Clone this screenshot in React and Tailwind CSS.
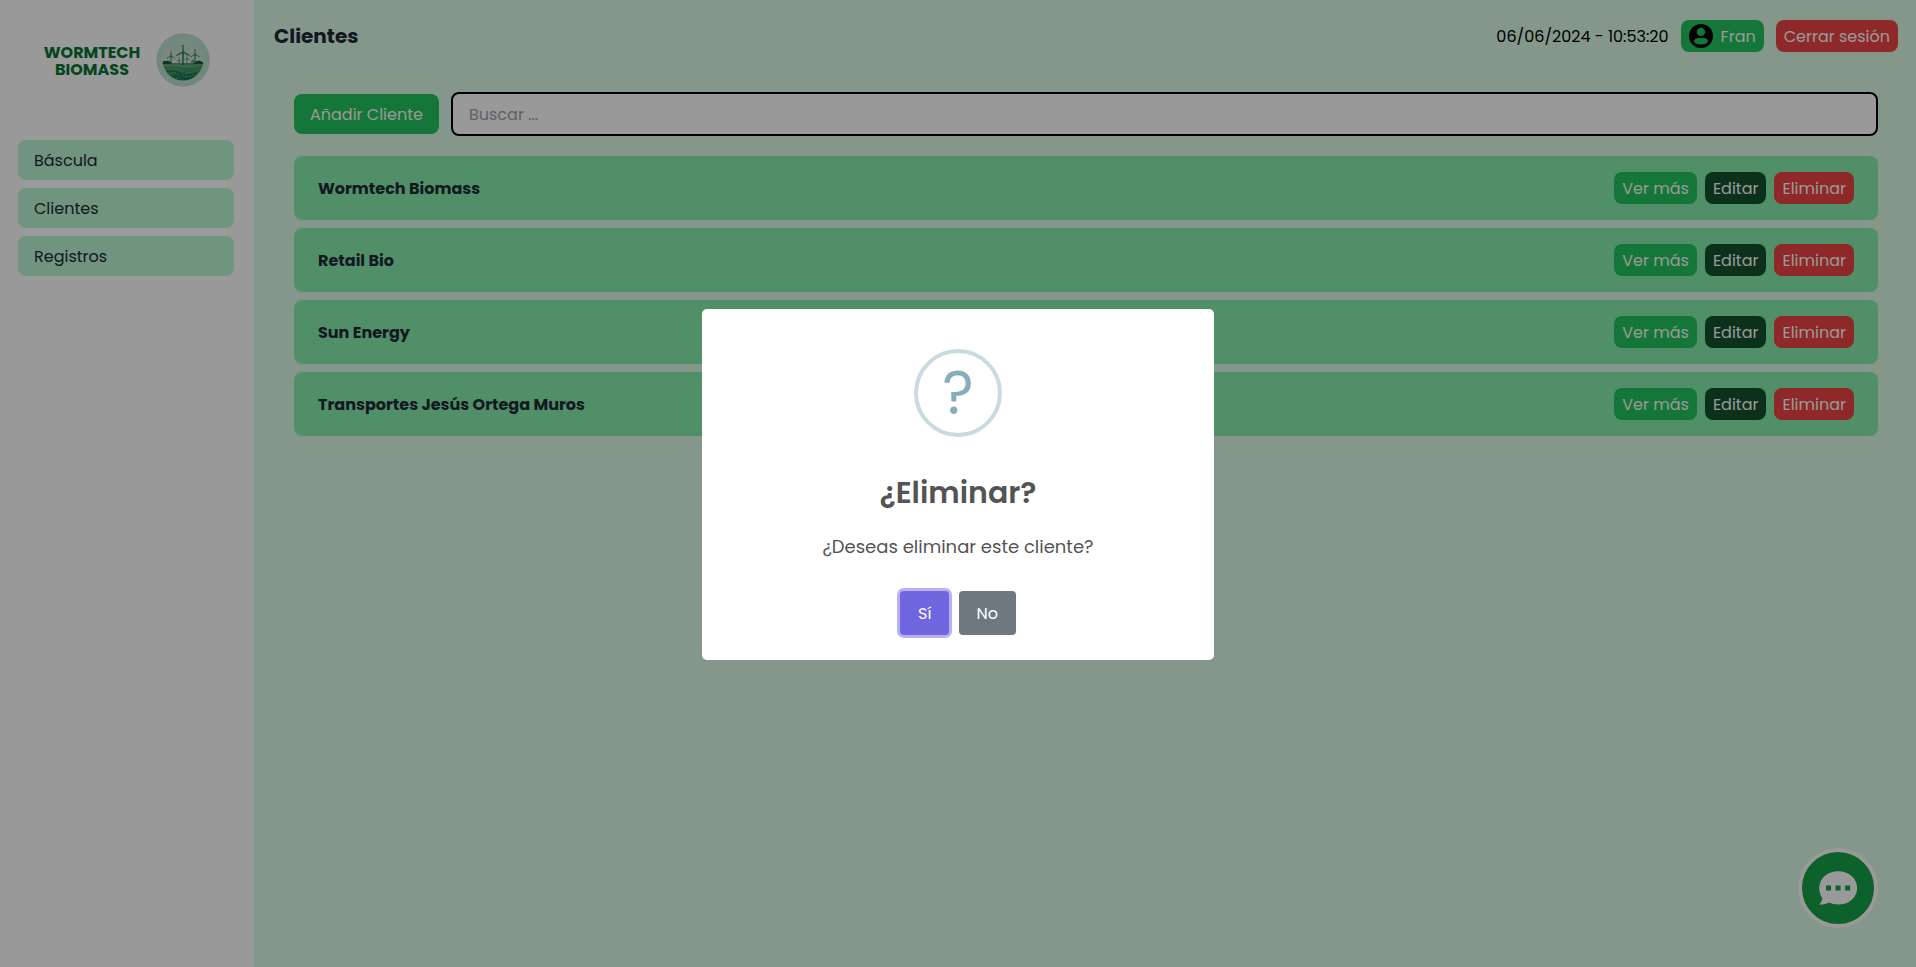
const clients = [
  "Wormtech Biomass",
  "Retail Bio",
  "Sun Energy",
  "Transportes Jesús Ortega Muros",
];

const sections = ["Báscula", "Clientes", "Registros"];

function Turbine({ x, y, h, r }) {
  return (
    <g transform={`translate(${x} ${y})`} stroke="#1d6b62" strokeLinecap="round" fill="none">
      <path d={`M0 0V${h}`} strokeWidth={r * 0.2} />
      <path d={`M0 0V${-r}M0 0L${r * 0.87} ${r * 0.45}M0 0L${-r * 0.87} ${r * 0.45}`} strokeWidth={r * 0.16} />
    </g>
  );
}

function LogoBadge() {
  return (
    <svg className="size-[54px]" viewBox="0 0 54 54">
      <defs>
        <clipPath id="scene">
          <circle cx="27" cy="27" r="20.5" />
        </clipPath>
        <linearGradient id="sky" x1="0" y1="0" x2="0" y2="1">
          <stop offset="0" stopColor="#bfe3d3" />
          <stop offset="0.4" stopColor="#c8e2d2" />
          <stop offset="0.6" stopColor="#e2e6d4" />
        </linearGradient>
        <linearGradient id="field" x1="0" y1="0" x2="0" y2="1">
          <stop offset="0" stopColor="#5aa272" />
          <stop offset="0.5" stopColor="#2f8862" />
          <stop offset="1" stopColor="#0d5f56" />
        </linearGradient>
      </defs>
      <circle cx="27" cy="27" r="26.7" fill="#bfe3d3" />
      <g clipPath="url(#scene)">
        <rect width="54" height="54" fill="url(#sky)" />
        <path d="M9 20q3-3 6-1q3-1 4 1zM33 18q3-3 5 0q3 0 4 1z" fill="#e6e8da" />
        <rect y="30" width="54" height="24" fill="url(#field)" />
        <path d="M5 31q2-4 5-3q4-1 6 3zM37 31q1-3 4-3q3-2 8 3z" fill="#15594f" />
        <path d="M7 33q10-2 18 0t20-1" stroke="#7cba74" strokeWidth="0.9" fill="none" />
        <path
          d="M8 37q10-3 18 1t20-2M11 41q9-3 15 1t16-2M20 46q4-3 7-1t8 0"
          stroke="#6db06c"
          strokeWidth="0.8"
          strokeDasharray="2.500 1.200"
          fill="none"
        />
        <path
          d="M11 39q8-2 14 2t16-2M16 44q6-2 11 1t11-2"
          stroke="#0f665a"
          strokeWidth="1.4"
          strokeDasharray="2 1"
          fill="none"
        />
      </g>
      <Turbine x={27} y={19} h={12} r={7} />
      <Turbine x={15} y={23} h={8} r={4.4} />
      <Turbine x={39} y={21.5} h={9} r={5} />
      <Turbine x={23} y={27} h={4} r={2.6} />
      <Turbine x={31} y={25.5} h={5} r={3} />
      <path d="M35 30v-2l2-1.500l2 1.500v2z" fill="#7d9c8a" />
    </svg>
  );
}

function Sidebar() {
  return (
    <aside className="flex w-[254px] shrink-0 flex-col bg-white pl-[18px] pr-5">
      <div className="flex h-[140px] items-start gap-[15px] pl-[25px] pt-[33px]">
        <div className="mt-[11px] w-[98px] text-center text-[16px] font-bold leading-[17px] text-[#087436]">
          WORMTECH
          <br />
          BIOMASS
        </div>
        <LogoBadge />
      </div>
      <nav className="flex flex-col gap-2">
        {sections.map((name) => (
          <a key={name} className="rounded-lg bg-[#bbf7d0] px-4 pb-[7px] pt-[9px] text-[#1f2937]">
            {name}
          </a>
        ))}
      </nav>
    </aside>
  );
}

function UserIcon() {
  return (
    <svg className="size-6" viewBox="0 0 24 24">
      <circle cx="12" cy="12" r="12" fill="#000" />
      <circle cx="12" cy="7.900" r="4.200" fill="#22c55e" />
      <path
        d="M9 13.900h6c2.200 0 3.900 1.300 3.900 3.100c0 2-2.900 3.500-6.900 3.500s-6.900-1.500-6.900-3.500c0-1.800 1.700-3.100 3.900-3.100z"
        fill="#22c55e"
      />
    </svg>
  );
}

function Header() {
  return (
    <header className="flex h-[72px] items-center justify-between pl-5 pr-[18px]">
      <h1 className="text-xl font-bold text-[#1f2937]">Clientes</h1>
      <div className="flex items-center gap-3">
        <span className="pt-[2px] text-black">06/06/2024 - 10:53:20</span>
        <button className="flex h-8 items-center gap-2 rounded-lg bg-[#22c55e] px-2 text-white">
          <UserIcon />
          <span className="pt-[2px]">Fran</span>
        </button>
        <button className="rounded-lg bg-[#ef4444] px-2 pb-[3px] pt-[5px] text-white">Cerrar sesión</button>
      </div>
    </header>
  );
}

function ClientRow({ name }) {
  return (
    <li className="flex items-center justify-between rounded-lg bg-[#86efac] px-6 py-4">
      <span className="pt-[2px] font-bold text-[#1f2937]">{name}</span>
      <div className="flex gap-2 text-white">
        <button className="rounded-lg bg-[#22c55e] px-2 pb-[3px] pt-[5px]">Ver más</button>
        <button className="rounded-lg bg-[#14532d] px-2 pb-[3px] pt-[5px]">Editar</button>
        <button className="rounded-lg bg-[#ef4444] px-2 pb-[3px] pt-[5px]">Eliminar</button>
      </div>
    </li>
  );
}

function ChatButton() {
  return (
    <button className="fixed bottom-[39px] right-[38px] size-20 rounded-full border-4 border-white bg-[#16a34a]">
      <svg className="size-[72px]" viewBox="0 0 72 72">
        <path
          d="M36.200 19.200c10.600 0 19 7.300 19 16.700s-8.400 16.700-19 16.700c-3.400 0-6.600-.7-9.400-2c-2.500 1.500-6 2.200-9.600 2.200c1.500-1.800 2.700-4.200 3.200-6.500c-2-2.900-3.200-6.500-3.200-10.400c0-9.400 8.400-16.700 19-16.700z"
          fill="#fff"
        />
        <path d="M24 33.400h5v5h-5zM33.600 33.400h5v5h-5zM43.200 33.400h5v5h-5z" fill="#16a34a" />
      </svg>
    </button>
  );
}

function ConfirmDialog() {
  return (
    <div className="fixed inset-0 flex items-center justify-center bg-black/40">
      <div
        role="dialog"
        className="mt-[2px] flex w-[512px] flex-col items-center rounded-[5px] bg-white pb-5 text-[#545454]"
      >
        <div className="mt-10 flex size-[88px] items-center justify-center rounded-full border-4 border-[#c9dae1] text-[60px] leading-[80px] text-[#87adbd]">
          ?
        </div>
        <h2 className="mt-[8.600px] pt-6 text-[30px] font-semibold leading-[45px]">¿Eliminar?</h2>
        <p className="mt-[18px] text-[18px] leading-[27px]">¿Deseas eliminar este cliente?</p>
        <div className="mt-[31.400px] mb-[5px] flex gap-[10px] text-white">
          <button className="rounded-[4px] bg-[#7066e0] px-[17.600px] pb-[9px] pt-[11px] shadow-[0_0_0_3px_rgba(112,102,224,0.5)]">
            Sí
          </button>
          <button className="rounded-[4px] bg-[#6e7881] px-[17.600px] pb-[9px] pt-[11px]">No</button>
        </div>
      </div>
    </div>
  );
}

export default function App() {
  return (
    <div className="flex h-screen overflow-hidden bg-[#dcfce7] font-['Poppins',sans-serif] text-base">
      <Sidebar />
      <div className="flex min-w-0 flex-1 flex-col">
        <Header />
        <main className="flex flex-col gap-5 pb-10 pl-10 pr-[38px] pt-5">
          <div className="flex items-center gap-3">
            <button className="rounded-lg bg-[#22c55e] px-4 pb-[7px] pt-[9px] text-white">Añadir Cliente</button>
            <input
              type="text"
              placeholder="Buscar ..."
              className="min-w-0 flex-1 rounded-lg border-2 border-black bg-white px-4 pb-[7px] pt-[9px] placeholder:text-[#9ca3af]"
            />
          </div>
          <ul className="flex flex-col gap-2">
            {clients.map((name) => (
              <ClientRow key={name} name={name} />
            ))}
          </ul>
        </main>
      </div>
      <ChatButton />
      <ConfirmDialog />
    </div>
  );
}
